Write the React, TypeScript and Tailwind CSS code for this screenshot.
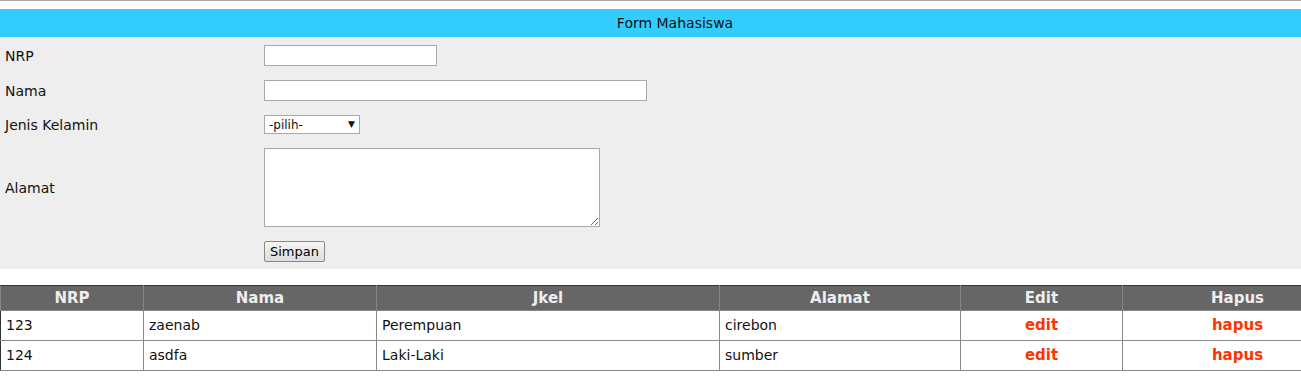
import React from 'react';

type Mhs = { nrp: string; nama: string; jkel: string; alamat: string };

const data: Mhs[] = [
  { nrp: '123', nama: 'zaenab', jkel: 'Perempuan', alamat: 'cirebon' },
  { nrp: '124', nama: 'asdfa', jkel: 'Laki-Laki', alamat: 'sumber' },
];

const font = { fontFamily: 'Tahoma, "DejaVu Sans", Verdana, sans-serif' };

const App: React.FC = () => {
  return (
    <div className="w-[1301px] h-[383px] overflow-hidden bg-white text-[14px] text-[#111]" style={font}>
      <div className="w-[1350px]">
        <div className="h-px bg-[#aaaaaa]" />
        <div className="mt-2 h-[28px] bg-[#33ccff] flex items-center justify-center">Form Mahasiswa</div>
        <div className="bg-[#eeeeee] pt-[7px] h-[232px]">
          <div className="flex items-center h-[21px] mt-px">
            <div className="w-[264px] pl-[5px] pt-[2px]">NRP</div>
            <input className="w-[173px] h-[21px] bg-white border border-[#a9a9a9]" />
          </div>
          <div className="flex items-center h-[21px] mt-[14px]">
            <div className="w-[264px] pl-[5px] pt-[2px]">Nama</div>
            <input className="w-[383px] h-[21px] bg-white border border-[#a9a9a9]" />
          </div>
          <div className="flex items-center h-[19px] mt-[14px]">
            <div className="w-[264px] pl-[5px] pt-[2px]">Jenis Kelamin</div>
            <div className="w-[96px] h-[19px] bg-white border border-[#a9a9a9] flex items-center justify-between px-[4px] text-[12px]">
              <span>-pilih-</span>
              <span className="text-[9px]">▼</span>
            </div>
          </div>
          <div className="flex items-center h-[79px] mt-[14px]">
            <div className="w-[264px] pl-[5px] pt-[2px]">Alamat</div>
            <textarea className="w-[336px] h-[79px] bg-white border border-[#a9a9a9] resize" />
          </div>
          <div className="flex items-center h-[21px] mt-[14px]">
            <div className="w-[264px]" />
            <button className="w-[61px] h-[21px] border border-[#888] rounded-[2px] bg-gradient-to-b from-[#f6f6f6] to-[#dddddd] text-[13px] text-black">Simpan</button>
          </div>
        </div>
        <table className="mt-4 w-[1352px] border-collapse border border-[#333] table-fixed">
          <colgroup>
            <col className="w-[143px]" />
            <col className="w-[233px]" />
            <col className="w-[343px]" />
            <col className="w-[241px]" />
            <col className="w-[162px]" />
            <col className="w-[230px]" />
          </colgroup>
          <thead>
            <tr className="bg-[#666666] text-[#eeeeee] font-bold h-[25px]">
              {['NRP', 'Nama', 'Jkel', 'Alamat', 'Edit', 'Hapus'].map((h) => (
                <th key={h} className="border border-[#888] border-t-[#333] text-center font-bold text-[15px]">{h}</th>
              ))}
            </tr>
          </thead>
          <tbody>
            {data.map((m) => (
              <tr key={m.nrp} className="h-[30px]">
                <td className="border border-[#888] border-l-[#333] pl-[5px]">{m.nrp}</td>
                <td className="border border-[#888] pl-[5px]">{m.nama}</td>
                <td className="border border-[#888] pl-[5px]">{m.jkel}</td>
                <td className="border border-[#888] pl-[5px]">{m.alamat}</td>
                <td className="border border-[#888] text-center font-bold text-[15px] text-[#ff3300]">edit</td>
                <td className="border border-[#888] text-center font-bold text-[15px] text-[#ff3300]">hapus</td>
              </tr>
            ))}
          </tbody>
        </table>
      </div>
    </div>
  );
};

export default App;
